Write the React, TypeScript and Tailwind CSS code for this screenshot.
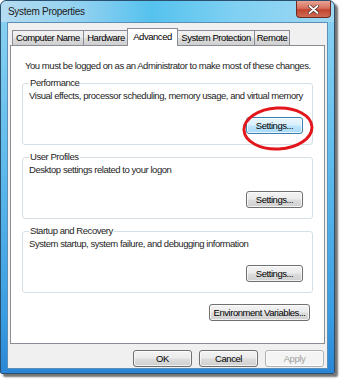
import React from 'react';

const font = { fontFamily: '"Liberation Sans", Arial, sans-serif' };

type BtnProps = {
  label: string;
  w: string;
  hot?: boolean;
  disabled?: boolean;
};

const Btn = ({ label, w, hot, disabled }: BtnProps) => {
  let cls = 'border-[#707070] bg-[linear-gradient(to_bottom,#f3f3f3_0%,#ebebeb_48%,#dddddd_52%,#cfcfcf_100%)] text-black';
  if (hot) cls = 'border-[#3c7fb1] bg-[linear-gradient(to_bottom,#eaf6fd_0%,#d9f0fc_48%,#bee6fd_52%,#a7d9f5_100%)] text-black';
  if (disabled) cls = 'border-[#adb2b5] bg-[#f4f4f4] text-[#a0a0a0]';
  return (
    <button className={`${w} h-[17px] whitespace-nowrap rounded-[3px] border text-[9.5px] leading-none tracking-[-0.45px] shadow-[inset_0_0_0_1px_rgba(255,255,255,0.7)] ${cls}`}>
      {label}
    </button>
  );
};

const Group = ({ title, text, hot }: { title: string; text: string; hot?: boolean }) => (
  <fieldset className="relative mx-[11px] h-[68px] rounded-[3px] border border-[#d5dfe5] px-[6px]">
    <legend className="px-[1px] text-[9.5px] leading-[12px] tracking-[-0.45px] text-[#1e1e1e]">{title}</legend>
    <p className="mt-[1px] whitespace-nowrap text-[9.5px] leading-[12px] tracking-[-0.45px] text-[#1e1e1e]">{text}</p>
    <div className="mt-[15px] flex justify-end pr-[3px]">
      <Btn label="Settings..." w="w-[57px]" hot={hot} />
    </div>
    {hot && (
      <svg className="pointer-events-none absolute left-[219px] top-[17px]" width="72" height="46" viewBox="0 0 72 46">
        <ellipse cx="36" cy="22.5" rx="34" ry="20.5" fill="none" stroke="#e3171b" strokeWidth="3" transform="rotate(-3 36 23)" />
      </svg>
    )}
  </fieldset>
);

const tabs = [
  { t: 'Computer Name', w: 'w-[71px]' },
  { t: 'Hardware', w: 'w-[45px]' },
  { t: 'Advanced', w: 'w-[51px]' },
  { t: 'System Protection', w: 'w-[77px]' },
  { t: 'Remote', w: 'w-[36px]' },
];

export default function App() {
  return (
    <div className="h-[384px] w-[344px] bg-white" style={font}>
      <div className="flex h-[374px] w-[335px] flex-col rounded-t-[6px] rounded-b-[2px] border border-[#2b4f6e] bg-[linear-gradient(to_bottom,#8dd3f2_0%,#62bdec_40%,#3a9de2_85%,#2a86d6_100%)] px-[6px] pb-[4px] shadow-[3px_3px_2px_rgba(0,0,0,0.55)]">
        <div className="-mx-[6px] flex h-[21px] items-start justify-between rounded-t-[6px] bg-[linear-gradient(to_right,#b5dcf1_0%,#8fd0f0_25%,#55c2ee_45%,#7fd0f2_70%,#9fd8f2_100%)] pl-[7px] pr-[3px]">
          <span className="mt-[5px] text-[10px] leading-[12px] tracking-[-0.3px] text-[#1a1a1a]">System Properties</span>
          <div className="flex h-[17px] w-[35px] items-center justify-center rounded-b-[4px] border border-t-0 border-[#6d2a22] bg-[linear-gradient(to_bottom,#e8a394_0%,#d6705e_45%,#c0442f_55%,#cf6a52_100%)]">
            <svg width="11" height="9" viewBox="0 0 11 9">
              <path d="M1.5 1 L9.5 8 M9.5 1 L1.5 8" stroke="#4a2a26" strokeWidth="3.2" strokeLinecap="round" />
              <path d="M1.5 1 L9.5 8 M9.5 1 L1.5 8" stroke="#ffffff" strokeWidth="1.8" strokeLinecap="round" />
            </svg>
          </div>
        </div>
        <div className="flex flex-1 flex-col border border-[#5b8fb5] bg-[#f0f0f0] px-[2px]">
          <div className="mt-[5px] flex items-end pl-[2px]">
            {tabs.map(({ t, w }) =>
              t === 'Advanced' ? (
                <div key={t} className={`${w} relative z-10 -mx-[1px] -mb-[1px] flex h-[18px] items-start justify-center whitespace-nowrap border border-b-0 border-[#898c95] bg-white pt-[2px] text-[9.5px] leading-[12px] tracking-[-0.45px] text-black`}>
                  {t}
                </div>
              ) : (
                <div key={t} className={`${w} flex h-[15px] items-center justify-center whitespace-nowrap border border-b-0 border-r-0 border-[#898c95] bg-[linear-gradient(to_bottom,#f2f2f2_0%,#ebebeb_50%,#dddddd_51%,#cfcfcf_100%)] text-[9.5px] leading-[12px] tracking-[-0.45px] text-black last:border-r`}>
                  {t}
                </div>
              )
            )}
          </div>
          <div className="flex h-[299px] flex-col border border-[#898c95] bg-white">
            <p className="mt-[14px] whitespace-nowrap pl-[14px] text-[9.5px] leading-[12px] tracking-[-0.45px] text-[#1e1e1e]">
              You must be logged on as an Administrator to make most of these changes.
            </p>
            <div className="mt-[5px] flex flex-col gap-[6px]">
              <Group title="Performance" text="Visual effects, processor scheduling, memory usage, and virtual memory" hot />
              <Group title="User Profiles" text="Desktop settings related to your logon" />
              <Group title="Startup and Recovery" text="System startup, system failure, and debugging information" />
            </div>
            <div className="mt-[11px] flex justify-end pr-[14px]">
              <Btn label="Environment Variables..." w="w-[101px]" />
            </div>
          </div>
          <div className="mt-[6px] flex justify-end gap-[7px] pr-[1px]">
            <Btn label="OK" w="w-[59px]" />
            <Btn label="Cancel" w="w-[59px]" />
            <Btn label="Apply" w="w-[59px]" disabled />
          </div>
        </div>
      </div>
    </div>
  );
}
